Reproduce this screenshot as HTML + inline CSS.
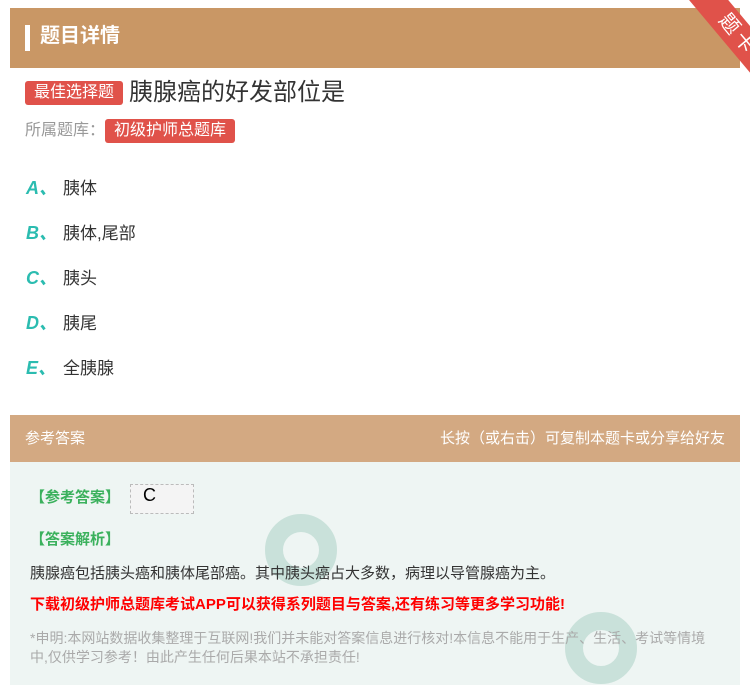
<!DOCTYPE html>
<html><head><meta charset="utf-8"><style>
*{margin:0;padding:0;box-sizing:border-box}
body{width:750px;height:685px;background:#fff;font-family:"Liberation Sans","Noto Sans CJK SC",sans-serif;position:relative;overflow:hidden}
.hdr{position:absolute;left:10px;top:8px;width:730px;height:60px;background:#c99765}
.hdr .bar{position:absolute;left:15px;top:17px;width:5px;height:26px;background:#fff}
.hdr .t{position:absolute;left:30px;top:14px;color:#fff;font-size:20px;font-weight:bold;line-height:28px}
.rib{position:absolute;right:0;top:0;width:95px;height:90px;overflow:hidden}
.rib div{position:absolute;left:18px;top:20px;width:130px;height:30px;background:#e0524a;transform:rotate(50deg);color:#fff;font-size:20px;text-align:center;line-height:30px;letter-spacing:4px}
.tag{display:inline-block;background:#e0524a;color:#fff;border-radius:3px;font-size:16px;padding:0 9px;line-height:24px}
.q{position:absolute;left:25px;top:78px;font-size:24px;color:#333;line-height:30px}
.q .tag{vertical-align:3px;margin-right:6px}
.lib{position:absolute;left:25px;top:119px;font-size:16px;color:#999;line-height:24px}
.opt{position:absolute;left:26px;font-size:17px;color:#333}
.opt b{color:#2bbcb0;font-style:italic;font-size:18px;display:inline-block;width:37px}
.ah{position:absolute;left:10px;top:415px;width:730px;height:47px;background:#d3a982;color:#fff;font-size:15px;line-height:47px;padding:0 15px}
.ah span{float:right}
.ab{position:absolute;left:10px;top:462px;width:730px;height:223px;background:#eef5f3;overflow:hidden}
.g{color:#3bb15d;font-weight:bold;font-size:15px;position:absolute;left:20px}
.c{position:absolute;left:120px;top:22px;width:64px;height:30px;background:#f4f4f4;border:1px dashed #bbb;font-size:18px;padding-left:12px}
.ring{position:absolute;border-radius:50%;border:18px solid #b9d9cf;opacity:.7}
</style></head><body>
<div class="hdr"><div class="bar"></div><div class="t">题目详情</div></div>
<div class="rib"><div>题卡</div></div>
<div class="q"><span class="tag">最佳选择题</span>胰腺癌的好发部位是</div>
<div class="lib">所属题库：<span class="tag">初级护师总题库</span></div>
<div class="opt" style="top:174px"><b>A、</b>胰体</div>
<div class="opt" style="top:219px"><b>B、</b>胰体,尾部</div>
<div class="opt" style="top:264px"><b>C、</b>胰头</div>
<div class="opt" style="top:309px"><b>D、</b>胰尾</div>
<div class="opt" style="top:354px"><b>E、</b>全胰腺</div>
<div class="ah">参考答案<span>长按（或右击）可复制本题卡或分享给好友</span></div>
<div class="ab">
<div class="ring" style="left:255px;top:52px;width:72px;height:72px"></div>
<div class="ring" style="left:555px;top:150px;width:72px;height:72px"></div>
<div class="g" style="top:24px">【参考答案】</div>
<div class="c">C</div>
<div class="g" style="top:66px">【答案解析】</div>
<div style="position:absolute;left:20px;top:100px;font-size:15px;color:#333">胰腺癌包括胰头癌和胰体尾部癌。其中胰头癌占大多数，病理以导管腺癌为主。</div>
<div style="position:absolute;left:20px;top:131px;font-size:15px;color:#f00;font-weight:bold">下载初级护师总题库考试APP可以获得系列题目与答案,还有练习等更多学习功能!</div>
<div style="position:absolute;left:20px;top:167px;width:680px;font-size:14px;color:#aaa;line-height:19px">*申明:本网站数据收集整理于互联网!我们并未能对答案信息进行核对!本信息不能用于生产、生活、考试等情境中,仅供学习参考！由此产生任何后果本站不承担责任!</div>
</div>
</body></html>
